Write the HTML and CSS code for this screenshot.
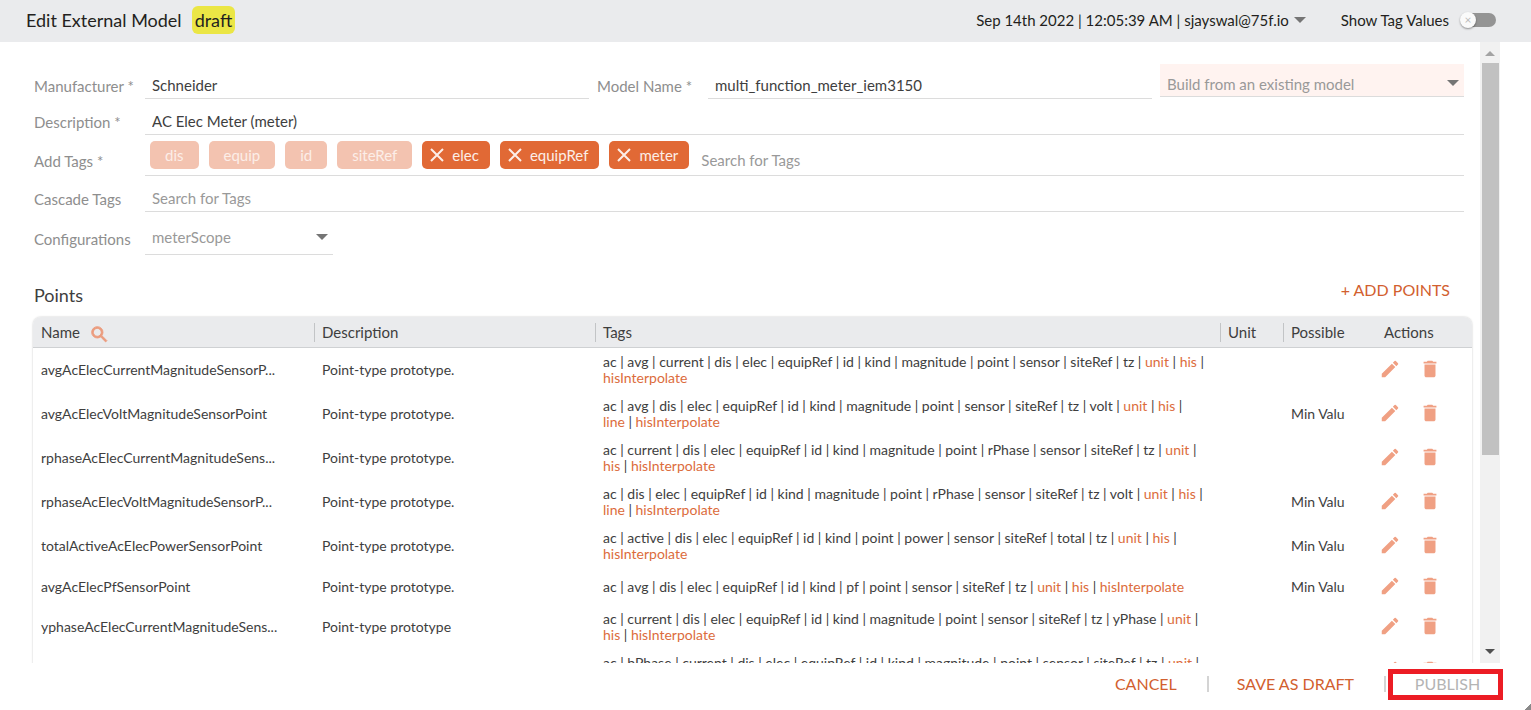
FILE: index.html
```html
<!DOCTYPE html>
<html lang="en">
<head>
  <meta charset="utf-8">
  <title>Edit External Model</title>
  <link rel="stylesheet" href="styles.css">
</head>
<body>
  <!-- icon shapes shared by the rows -->
  <svg class="sprite" aria-hidden="true">
    <symbol id="edit" viewBox="0 0 24 24"><path d="M3 17.25V21h3.75L17.81 9.94l-3.75-3.75L3 17.25zM20.71 7.04a1 1 0 0 0 0-1.41l-2.34-2.34a1 1 0 0 0-1.41 0l-1.83 1.83 3.75 3.75 1.83-1.83z"/></symbol>
    <symbol id="delete" viewBox="0 0 24 24"><path d="M6 19c0 1.1.9 2 2 2h8c1.100 0 2-.9 2-2V7H6v12zM19 4h-3.500l-1-1h-5l-1 1H5v2h14V4z"/></symbol>
    <symbol id="search" viewBox="0 0 24 24"><path d="M15.500 14h-.79l-.28-.27A6.470 6.470 0 0 0 16 9.500 6.500 6.500 0 1 0 9.500 16c1.610 0 3.090-.59 4.230-1.570l.27.28v.79l5 4.990L20.490 19l-4.990-5zm-6 0C7.010 14 5 11.990 5 9.500S7.010 5 9.500 5 14 7.010 14 9.500 11.990 14 9.500 14z"/></symbol>
    <symbol id="close" viewBox="0 0 14 14"><path d="M1 1l12 12M13 1L1 13" fill="none" stroke="currentColor" stroke-width="2"/></symbol>
    <symbol id="caret" viewBox="0 0 12 6"><path d="M0 0h12L6 6z"/></symbol>
  </svg>

  <header class="topbar">
    <h1>Edit External Model</h1>
    <span class="badge">draft</span>
    <button class="user-menu" type="button">Sep 14th 2022 | 12:05:39 AM | sjayswal@75f.io <svg class="caret"><use href="#caret"/></svg></button>
    <label class="toggle-label" for="showTags">Show Tag Values</label>
    <span class="toggle">
      <input type="checkbox" id="showTags">
      <span class="knob">×</span>
    </span>
  </header>

  <div class="main">
    <main class="content">
      <form class="form">
        <div class="form-row">
          <label for="manufacturer">Manufacturer *</label>
          <input class="field" type="text" id="manufacturer" value="Schneider">
          <label class="second" for="modelName">Model Name *</label>
          <input class="field" type="text" id="modelName" value="multi_function_meter_iem3150">
          <div class="select-box build">
            <select id="existing" aria-label="Build from an existing model">
              <option>Build from an existing model</option>
            </select>
            <svg class="caret"><use href="#caret"/></svg>
          </div>
        </div>
        <div class="form-row">
          <label for="description">Description *</label>
          <input class="field" type="text" id="description" value="AC Elec Meter (meter)">
        </div>
        <div class="form-row tags-row">
          <label for="addTags">Add Tags *</label>
          <div class="field chips">
            <span class="chip locked">dis</span>
            <span class="chip locked">equip</span>
            <span class="chip locked">id</span>
            <span class="chip locked">siteRef</span>
            <button class="chip" type="button"><svg><use href="#close"/></svg>elec</button>
            <button class="chip" type="button"><svg><use href="#close"/></svg>equipRef</button>
            <button class="chip" type="button"><svg><use href="#close"/></svg>meter</button>
            <input type="text" id="addTags" placeholder="Search for Tags">
          </div>
        </div>
        <div class="form-row">
          <label for="cascadeTags">Cascade Tags</label>
          <input class="field" type="text" id="cascadeTags" placeholder="Search for Tags">
        </div>
        <div class="form-row config-row">
          <label for="configurations">Configurations</label>
          <div class="select-box scope">
            <select id="configurations">
              <option>meterScope</option>
            </select>
            <svg class="caret"><use href="#caret"/></svg>
          </div>
        </div>
      </form>

      <div class="points-head">
        <h2>Points</h2>
        <button class="link-btn" type="button">+ ADD POINTS</button>
      </div>

      <div class="table-card">
        <table>
          <colgroup>
            <col class="c-name"><col class="c-desc"><col class="c-tags"><col class="c-unit"><col class="c-possible"><col class="c-actions">
          </colgroup>
          <thead>
            <tr>
              <th>Name<svg class="search"><use href="#search"/></svg></th>
              <th>Description</th>
              <th>Tags</th>
              <th>Unit</th>
              <th>Possible</th>
              <th>Actions</th>
            </tr>
          </thead>
          <tbody>
            <tr>
              <td>avgAcElecCurrentMagnitudeSensorP...</td>
              <td>Point-type prototype.</td>
              <td class="tags">ac | avg | current | dis | elec | equipRef | id | kind | magnitude | point | sensor | siteRef | tz | <b>unit</b> | <b>his</b> | <b>hisInterpolate</b></td>
              <td></td>
              <td></td>
              <td class="actions"><button type="button" aria-label="Edit"><svg><use href="#edit"/></svg></button><button type="button" aria-label="Delete"><svg><use href="#delete"/></svg></button></td>
            </tr>
            <tr>
              <td>avgAcElecVoltMagnitudeSensorPoint</td>
              <td>Point-type prototype.</td>
              <td class="tags">ac | avg | dis | elec | equipRef | id | kind | magnitude | point | sensor | siteRef | tz | volt | <b>unit</b> | <b>his</b> | <b>line</b> | <b>hisInterpolate</b></td>
              <td></td>
              <td>Min Valu</td>
              <td class="actions"><button type="button" aria-label="Edit"><svg><use href="#edit"/></svg></button><button type="button" aria-label="Delete"><svg><use href="#delete"/></svg></button></td>
            </tr>
            <tr>
              <td>rphaseAcElecCurrentMagnitudeSens...</td>
              <td>Point-type prototype.</td>
              <td class="tags">ac | current | dis | elec | equipRef | id | kind | magnitude | point | rPhase | sensor | siteRef | tz | <b>unit</b> | <b>his</b> | <b>hisInterpolate</b></td>
              <td></td>
              <td></td>
              <td class="actions"><button type="button" aria-label="Edit"><svg><use href="#edit"/></svg></button><button type="button" aria-label="Delete"><svg><use href="#delete"/></svg></button></td>
            </tr>
            <tr>
              <td>rphaseAcElecVoltMagnitudeSensorP...</td>
              <td>Point-type prototype.</td>
              <td class="tags">ac | dis | elec | equipRef | id | kind | magnitude | point | rPhase | sensor | siteRef | tz | volt | <b>unit</b> | <b>his</b> | <b>line</b> | <b>hisInterpolate</b></td>
              <td></td>
              <td>Min Valu</td>
              <td class="actions"><button type="button" aria-label="Edit"><svg><use href="#edit"/></svg></button><button type="button" aria-label="Delete"><svg><use href="#delete"/></svg></button></td>
            </tr>
            <tr>
              <td>totalActiveAcElecPowerSensorPoint</td>
              <td>Point-type prototype.</td>
              <td class="tags">ac | active | dis | elec | equipRef | id | kind | point | power | sensor | siteRef | total | tz | <b>unit</b> | <b>his</b> | <b>hisInterpolate</b></td>
              <td></td>
              <td>Min Valu</td>
              <td class="actions"><button type="button" aria-label="Edit"><svg><use href="#edit"/></svg></button><button type="button" aria-label="Delete"><svg><use href="#delete"/></svg></button></td>
            </tr>
            <tr>
              <td>avgAcElecPfSensorPoint</td>
              <td>Point-type prototype.</td>
              <td class="tags">ac | avg | dis | elec | equipRef | id | kind | pf | point | sensor | siteRef | tz | <b>unit</b> | <b>his</b> | <b>hisInterpolate</b></td>
              <td></td>
              <td>Min Valu</td>
              <td class="actions"><button type="button" aria-label="Edit"><svg><use href="#edit"/></svg></button><button type="button" aria-label="Delete"><svg><use href="#delete"/></svg></button></td>
            </tr>
            <tr>
              <td>yphaseAcElecCurrentMagnitudeSens...</td>
              <td>Point-type prototype</td>
              <td class="tags">ac | current | dis | elec | equipRef | id | kind | magnitude | point | sensor | siteRef | tz | yPhase | <b>unit</b> | <b>his</b> | <b>hisInterpolate</b></td>
              <td></td>
              <td></td>
              <td class="actions"><button type="button" aria-label="Edit"><svg><use href="#edit"/></svg></button><button type="button" aria-label="Delete"><svg><use href="#delete"/></svg></button></td>
            </tr>
            <tr>
              <td></td>
              <td></td>
              <td class="tags">ac | bPhase | current | dis | elec | equipRef | id | kind | magnitude | point | sensor | siteRef | tz | <b>unit</b> | <b>his</b> | <b>hisInterpolate</b></td>
              <td></td>
              <td></td>
              <td class="actions"><button type="button" aria-label="Edit"><svg><use href="#edit"/></svg></button><button type="button" aria-label="Delete"><svg><use href="#delete"/></svg></button></td>
            </tr>
          </tbody>
        </table>
      </div>
    </main>
    <div class="scrollbar">
      <svg class="arrow" viewBox="0 0 10 5"><path d="M5 0l5 5H0z"/></svg>
      <div class="thumb"></div>
      <svg class="arrow down" viewBox="0 0 10 5"><path d="M0 0h10L5 5z"/></svg>
    </div>
  </div>

  <footer class="footer">
    <button class="link-btn" type="button">CANCEL</button>
    <button class="link-btn" type="button">SAVE AS DRAFT</button>
    <button class="link-btn publish" type="button" disabled>PUBLISH</button>
    <span class="corner"></span>
  </footer>
</body>
</html>
```
FILE: styles.css
```css
* {
  box-sizing: border-box;
}

body {
  margin: 0;
  height: 100vh;
  display: flex;
  flex-direction: column;
  overflow: hidden;
  font-family: Lato, "Liberation Sans", sans-serif;
  font-size: 15px;
  color: #3e3e3e;
  background: #fff;
}

button,
input,
select {
  font: inherit;
  color: inherit;
  border: none;
  background: none;
  padding: 0;
  margin: 0;
  outline: none;
}

button {
  cursor: pointer;
}

.sprite {
  position: absolute;
  width: 0;
  height: 0;
}

.caret {
  width: 12px;
  height: 6px;
  fill: #757575;
}

/* top bar */
.topbar {
  flex: none;
  display: flex;
  align-items: center;
  height: 42px;
  padding: 0 35px 3px 26px;
  background: #eaebed;
  color: #231f20;
}

.topbar h1 {
  margin: 0;
  font-size: 18px;
  font-weight: 400;
}

.badge {
  margin-left: 10px;
  padding: 0 3px;
  border-radius: 6px;
  font-size: 18px;
  line-height: 28px;
  background: #ebe645;
}

.user-menu {
  display: flex;
  align-items: center;
  gap: 5px;
  margin-left: auto;
}

.toggle-label {
  margin-left: 35px;
}

.toggle {
  position: relative;
  width: 34px;
  height: 14px;
  margin-left: 13px;
}

.toggle input {
  appearance: none;
  display: block;
  width: 34px;
  height: 14px;
  border-radius: 7px;
  background: #949494;
}

.knob {
  position: absolute;
  left: -2px;
  top: -1px;
  width: 16px;
  height: 16px;
  border-radius: 50%;
  background: #fafafa;
  box-shadow: 0 1px 2px rgba(0, 0, 0, 0.4);
  color: #bbb;
  font-size: 12px;
  line-height: 15px;
  text-align: center;
  pointer-events: none;
}

/* scrolling body */
.main {
  flex: 1;
  min-height: 0;
  display: flex;
  padding-right: 31px;
}

.content {
  flex: 1;
  min-width: 0;
  overflow: hidden;
  padding: 20px 8px 0 33px;
}

.scrollbar {
  display: flex;
  flex-direction: column;
  align-items: center;
  width: 20px;
  padding: 9px 0;
  background: #f1f1f1;
}

.arrow {
  width: 10px;
  height: 5px;
  fill: #a3a3a3;
}

.arrow.down {
  margin-top: auto;
  fill: #505050;
}

.thumb {
  width: 17px;
  height: 65%;
  margin-top: 7px;
  background: #c1c1c1;
}

/* form */
.form {
  padding: 0 8px 0 1px;
}

.form-row {
  display: flex;
  align-items: stretch;
  height: 36px;
}

.form-row:first-child {
  height: 37px;
}

.form-row label {
  flex: none;
  width: 111px;
  padding-top: 1px;
  line-height: 44px;
  color: #8e8e8e;
}

.form-row:first-child label {
  padding-top: 2px;
}

.form-row label.second {
  margin-left: 8px;
}

.field {
  flex: 1;
  min-width: 0;
  padding: 8px 7px 0;
  border-bottom: 1px solid #dcdcdc;
}

.form-row:first-child .field {
  padding-top: 10px;
}

input::placeholder {
  color: #999;
  opacity: 1;
}

.form-row.tags-row {
  height: 41px;
}

.tags-row label {
  padding-top: 4px;
}

.chips {
  display: flex;
  align-items: flex-start;
  gap: 10px;
  padding: 6px 5px 0;
}

.chip {
  display: flex;
  align-items: center;
  gap: 8px;
  height: 28px;
  padding: 0 11px 0 8px;
  border-radius: 5px;
  background: #e16935;
  color: #fceee8;
}

.chip svg {
  width: 14px;
  height: 14px;
}

.chip.locked {
  padding: 0 15px;
  background: #f3c3b0;
}

.chips input {
  flex: 1;
  height: 28px;
  padding: 10px 0 0 2px;
}

.form-row.config-row {
  height: 43px;
}

.config-row label {
  padding-top: 5px;
}

.select-box {
  position: relative;
  border-bottom: 1px solid #dcdcdc;
  color: #999;
}

.select-box select {
  appearance: none;
  width: 100%;
  height: 100%;
  padding: 8px 24px 0 7px;
}

.select-box .caret {
  position: absolute;
  right: 5px;
  bottom: 10px;
}

.build {
  width: 304px;
  height: 33px;
  margin: 2px 0 0 8px;
  background: #fff3f0;
}

.scope {
  width: 188px;
}

.scope .caret {
  bottom: 14px;
}

/* points */
.points-head {
  display: flex;
  justify-content: space-between;
  padding: 22px 22px 0 1px;
  height: 62px;
}

.points-head h2 {
  margin: 0;
  padding-top: 6px;
  font-size: 18px;
  font-weight: 400;
  line-height: 24px;
}

.link-btn {
  height: 24px;
  font-size: 16px;
  color: #d2602f;
}

.table-card {
  border-radius: 8px 8px 0 0;
  overflow: hidden;
  box-shadow: 0 0 2px rgba(0, 0, 0, 0.25);
}

table {
  width: 100%;
  border-collapse: separate;
  border-spacing: 0;
  table-layout: fixed;
}

.c-name,
.c-desc {
  width: 281px;
}

.c-unit {
  width: 63px;
}

.c-possible {
  width: 93px;
}

.c-actions {
  width: 96px;
}

th {
  position: relative;
  height: 31px;
  padding: 0 8px;
  border-bottom: 1px solid #cfd1d3;
  background: #eaebed;
  font-weight: 400;
  text-align: left;
}

th:nth-child(n+2):nth-child(-n+5)::before {
  content: "";
  position: absolute;
  left: 0;
  top: 6px;
  width: 1px;
  height: 19px;
  background: #c2c4c6;
}

.search {
  width: 21px;
  height: 21px;
  margin: -4px 0 -4px 9px;
  vertical-align: middle;
  fill: #eb9c7e;
  stroke: #eb9c7e;
}

td {
  height: 37px;
  padding: 6px 8px;
  font-size: 14px;
  line-height: 16px;
  white-space: nowrap;
  overflow: hidden;
  text-overflow: ellipsis;
}

td.tags {
  padding-right: 14px;
  white-space: normal;
}

.tags b {
  font-weight: 400;
  color: #dc6c3c;
}

td.actions {
  padding: 0 0 2px 3px;
}

.actions button {
  width: 22px;
  height: 22px;
  margin-right: 18px;
  vertical-align: middle;
}

.actions button:last-child {
  margin-right: 0;
}

.actions svg {
  display: block;
  width: 22px;
  height: 22px;
  fill: #f0a083;
}

/* footer */
.footer {
  position: relative;
  flex: none;
  display: flex;
  align-items: flex-start;
  justify-content: flex-end;
  height: 47px;
  padding: 6px 28px 0 0;
}

.footer .link-btn {
  position: relative;
  height: 31px;
  padding: 0 30px 2px;
}

.footer .link-btn + .link-btn::before {
  content: "";
  position: absolute;
  left: 0;
  top: 7px;
  width: 2px;
  height: 16px;
  background: #d4d4d4;
}

.footer .publish {
  width: 119px;
  padding: 0 22px 2px 30px;
  color: #b4b4b4;
}

/* red frame that highlights the publish action */
.publish::after {
  content: "";
  position: absolute;
  inset: 0 0 0 4px;
  border: 5px solid #ec1c24;
}

.corner {
  position: absolute;
  right: 0;
  bottom: 0;
  width: 6px;
  height: 6px;
  background: linear-gradient(135deg, transparent 50%, #8a8a8a 50%);
}
```
